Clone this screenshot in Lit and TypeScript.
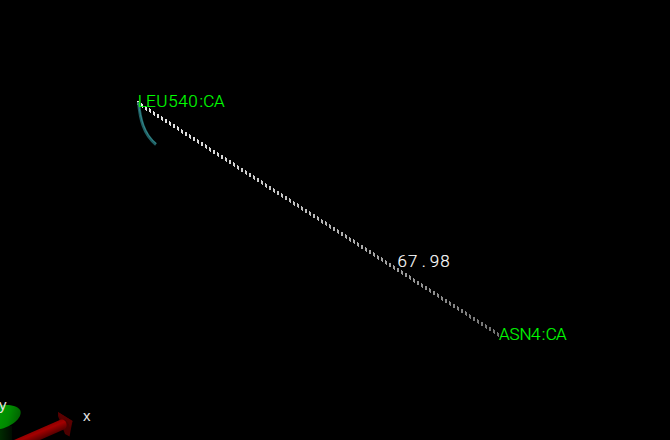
import { LitElement, css, html, svg } from "lit";
import { customElement } from "lit/decorators.js";

const START = { x: 137, y: 102 };
const END = { x: 499, y: 334.5 };
const SLOPE = (END.y - START.y) / (END.x - START.x);

// Stippled distance line: two lit columns in every four, dimmed with depth.
function stipple() {
  const columns = [];
  for (let x = START.x; x < END.x; x++) {
    if ((x - START.x) % 4 > 1) continue;
    const t = (x - START.x) / (END.x - START.x);
    const top = Math.round(START.y + SLOPE * (x + 0.5 - START.x) - 1.6);
    const v = Math.round(232 - 72 * t - 48 * t * t);
    columns.push(svg`<rect x=${x} y=${top} width="1" height="4" fill="rgb(${v},${v},${v})"/>`);
  }
  return columns;
}

@customElement("app-root")
export class AppRoot extends LitElement {
  static styles = css`
    :host {
      display: block;
      width: 670px;
      height: 440px;
      background: #000;
      overflow: hidden;
    }
    svg {
      display: block;
    }
    .atom {
      fill: #00ff00;
      stroke: #00ff00;
      stroke-width: 0.15px;
      font: 300 17px Roboto, "Liberation Sans", sans-serif;
    }
    .distance {
      fill: #ffffff;
      stroke: #ffffff;
      stroke-width: 0.15px;
      font: 300 17px Roboto, "Liberation Sans", sans-serif;
    }
    .axis {
      fill: #e4e4e4;
      font: 15px "Liberation Sans", sans-serif;
    }
  `;

  render() {
    return html`
      <svg width="670" height="440" viewBox="0 0 670 440">
        <defs>
          <linearGradient id="cone" x1="0" y1="0" x2="1" y2="0.3">
            <stop offset="0" stop-color="#009900" />
            <stop offset="0.5" stop-color="#008a00" />
            <stop offset="1" stop-color="#006400" />
          </linearGradient>
          <linearGradient id="stem" x1="0" y1="0" x2="1" y2="0">
            <stop offset="0" stop-color="#002b00" />
            <stop offset="1" stop-color="#000c00" />
          </linearGradient>
          <linearGradient id="shaft" gradientUnits="userSpaceOnUse" x1="40" y1="427" x2="45" y2="439">
            <stop offset="0" stop-color="#860000" />
            <stop offset="0.35" stop-color="#a40000" />
            <stop offset="1" stop-color="#480000" />
          </linearGradient>
        </defs>
        <g shape-rendering="crispEdges">${stipple()}</g>
        <path d="M138.500 102C140 118 143 134 156 144.500" fill="none" stroke="#205f63" stroke-width="3" />
        <path d="M138.500 103C140.500 118 144 134 156 143.500" fill="none" stroke="#32898c" stroke-width="1" />
        <path d="M0 426H12V440H0Z" fill="url(#stem)" />
        <path d="M0 405.500C10 404 20 406 20.700 412C21 420 9 427.500 0 429Z" fill="url(#cone)" />
        <path d="M58 412L72.500 421L69.500 436.500L65 434L58 416Z" fill="#4e0000" />
        <path d="M14 440L61 419.500C65 418 69 426 65 429L40 440Z" fill="url(#shaft)" />
        <path d="M58 412L72.500 421L70 428C69 422 65 418 61 419.500Z" fill="#5a0000" />
        <text class="atom" x="137.700 146 156.300 168.300 178.200 188.300 199.500 203.300 213.900" y="107">LEU540:CA</text>
        <text class="atom" x="499 509.500 519.500 531 541.800 545.800 556" y="340">ASN4:CA</text>
        <text class="distance" x="397.600 408.100 421.800 429.800 440.300" y="267">67.98</text>
        <text class="axis" x="-1" y="410">y</text>
        <text class="axis" x="83" y="421">x</text>
      </svg>
    `;
  }
}
